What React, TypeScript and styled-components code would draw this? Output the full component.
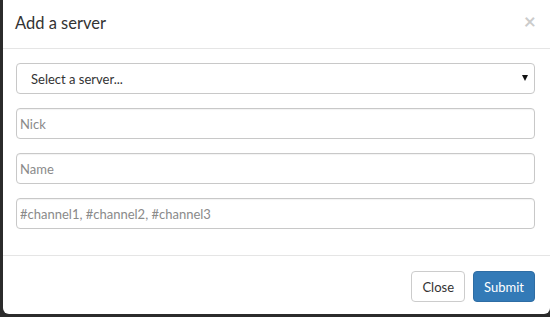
import React, { useState } from "react";
import styled, { createGlobalStyle } from "styled-components";

const GlobalStyle = createGlobalStyle`
    html, body {
        margin: 0;
        padding: 0;
        background: #2b2b2b;
        font-family: Lato, "Open Sans", sans-serif;
        overflow: hidden;
    }
`;

const Modal = styled.div`
    margin-left: 3px;
    width: 547px;
    height: 314px;
    background: #fff;
    border-radius: 0 0 6px 6px;
    display: flex;
    flex-direction: column;
    box-sizing: border-box;
    color: #333;
`;

const Header = styled.div`
    display: flex;
    align-items: flex-start;
    justify-content: space-between;
    padding: 10px 14px 12px 12px;
    border-bottom: 1px solid #e5e5e5;
`;

const Title = styled.h4`
    margin: 0;
    font-size: 16.5px;
    font-weight: 400;
    line-height: 26px;
    color: #333;
`;

const CloseX = styled.button`
    border: none;
    background: none;
    padding: 0;
    margin-top: -2px;
    font-family: Lato, sans-serif;
    font-size: 21px;
    font-weight: 700;
    line-height: 26px;
    color: #000;
    opacity: 0.2;
    cursor: pointer;
`;

const Body = styled.div`
    flex: 1;
    display: flex;
    flex-direction: column;
    gap: 14px;
    padding: 14px 15px 0 13px;
`;

const SelectBox = styled.div`
    position: relative;
    height: 31px;
    box-sizing: border-box;
    border: 1px solid #c8c8c8;
    border-radius: 4px;
    display: flex;
    align-items: center;
    padding-left: 14px;
    font-size: 13px;
    color: #333;
`;

const Caret = styled.span`
    position: absolute;
    right: 6px;
    top: 11px;
    width: 0;
    height: 0;
    border-left: 3px solid transparent;
    border-right: 3px solid transparent;
    border-top: 6px solid #111;
`;

const Input = styled.input`
    height: 31px;
    box-sizing: border-box;
    border: 1px solid #c8c8c8;
    border-radius: 4px;
    padding: 0 3px;
    font-family: Lato, sans-serif;
    font-size: 13px;
    color: #333;
    outline: none;
    box-shadow: inset 0 1px 1px rgba(0, 0, 0, 0.05);

    &::placeholder {
        color: #8a8a8a;
    }
`;

const Footer = styled.div`
    display: flex;
    justify-content: flex-end;
    gap: 8px;
    padding: 15px 15px 12px;
    border-top: 1px solid #e5e5e5;
`;

const Button = styled.button<{ $primary?: boolean }>`
    height: 31px;
    box-sizing: border-box;
    padding: 0 10px;
    font-family: Lato, sans-serif;
    font-size: 13px;
    border-radius: 4px;
    cursor: pointer;
    border: 1px solid ${props => props.$primary ? "#2e6da4" : "#cccccc"};
    background: ${props => props.$primary ? "#337ab7" : "#ffffff"};
    color: ${props => props.$primary ? "#ffffff" : "#333333"};
`;

export default function App() {
    const [nick, setNick] = useState("");
    const [name, setName] = useState("");
    const [channels, setChannels] = useState("");

    return (
        <>
            <GlobalStyle />
            <Modal>
                <Header>
                    <Title>Add a server</Title>
                    <CloseX>×</CloseX>
                </Header>
                <Body>
                    <SelectBox>
                        Select a server...
                        <Caret />
                    </SelectBox>
                    <Input placeholder="Nick" value={nick} onChange={(e) => setNick(e.target.value)} />
                    <Input placeholder="Name" value={name} onChange={(e) => setName(e.target.value)} />
                    <Input placeholder="#channel1, #channel2, #channel3" value={channels} onChange={(e) => setChannels(e.target.value)} />
                </Body>
                <Footer>
                    <Button>Close</Button>
                    <Button $primary>Submit</Button>
                </Footer>
            </Modal>
        </>
    );
}
